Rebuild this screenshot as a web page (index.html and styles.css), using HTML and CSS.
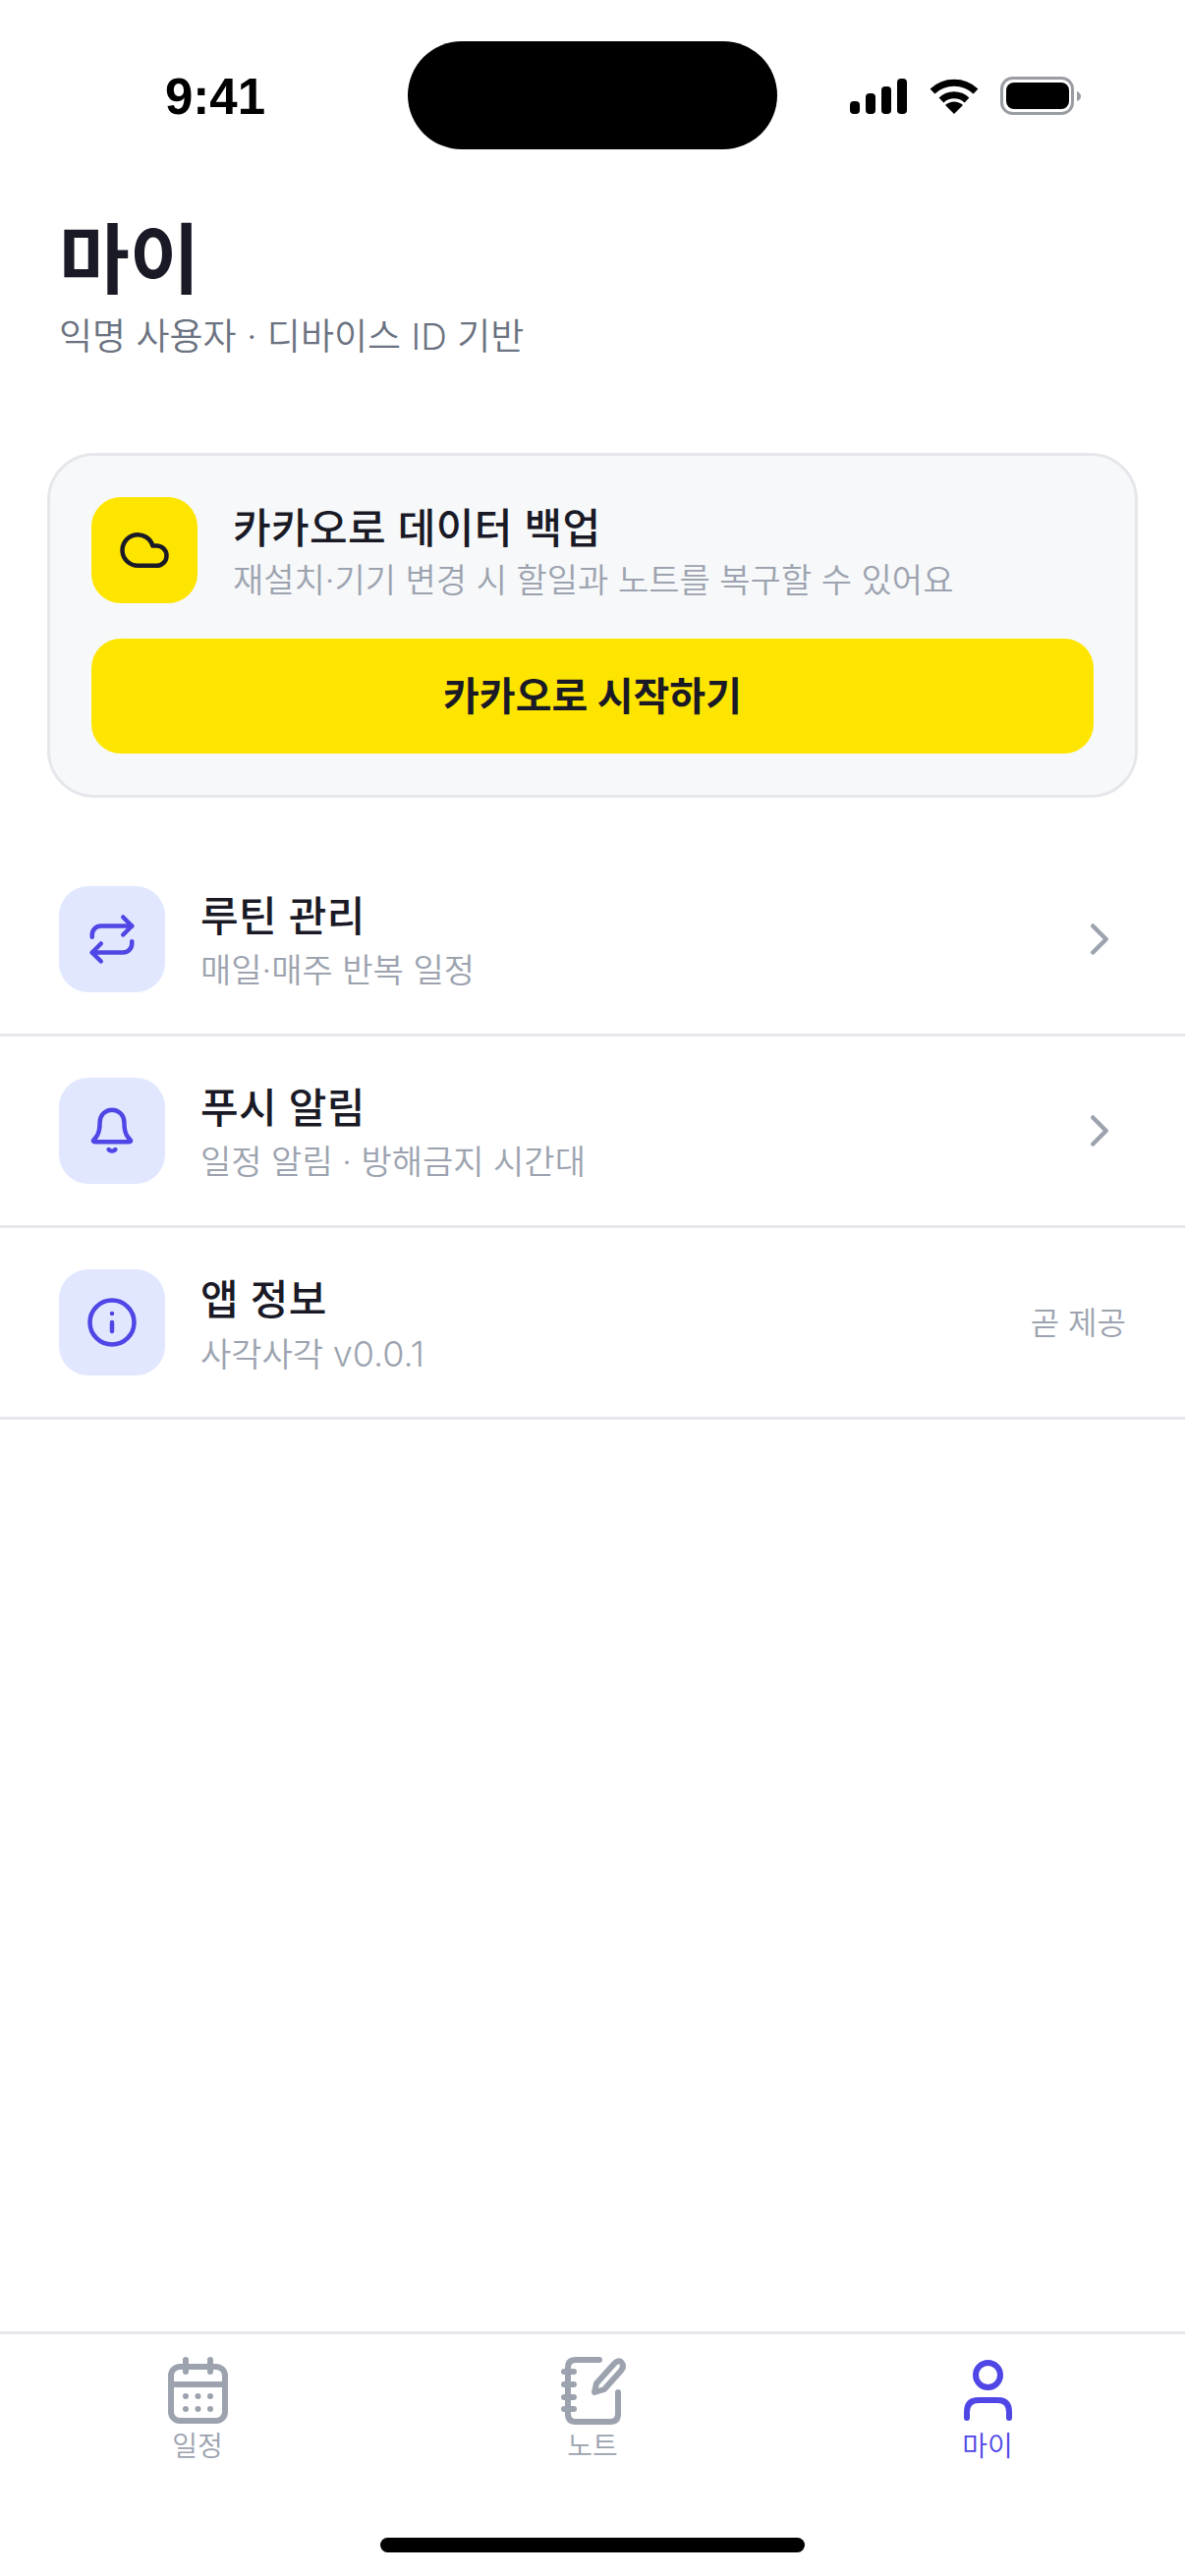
FILE: index.html
```html
<!DOCTYPE html>
<html lang="ko">
<head>
<meta charset="utf-8">
<title>마이</title>
<link rel="stylesheet" href="styles.css">
</head>
<body>
<div class="screen">
  <header class="status">
    <span class="time">9:41</span>
    <div class="island"></div>
    <div class="indicators">
      <svg class="ind-signal" width="58" height="36" viewBox="0 0 58 36"><rect x="0" y="23" width="10" height="13" rx="4"/><rect x="16" y="15" width="10" height="21" rx="4"/><rect x="32" y="8" width="10" height="28" rx="4"/><rect x="48" y="0" width="10" height="36" rx="4"/></svg>
      <svg class="ind-wifi" width="50" height="37" viewBox="0 0 50 37"><path d="M3 14A32 32 0 0 1 47 14" fill="none" stroke="#000" stroke-width="7"/><path d="M12 23A19 19 0 0 1 38 23" fill="none" stroke="#000" stroke-width="7"/><path d="M25 37L16 28A13 13 0 0 1 34 28Z"/></svg>
      <svg class="ind-battery" width="82" height="39" viewBox="0 0 82 39"><rect x="1.5" y="1.5" width="72" height="36" rx="11" fill="none" stroke="#9a9ca3" stroke-width="3"/><rect x="6" y="6" width="64" height="27" rx="8"/><path d="M78 15C81 16 82 18 82 20C82 22 81 24 78 25Z" fill="#9a9ca3"/></svg>
    </div>
  </header>

  <section class="title-block">
    <h1 class="page-title">마이</h1>
    <p class="page-sub">익명 사용자 · 디바이스 ID 기반</p>
  </section>

  <section class="card">
    <div class="card-head">
      <div class="tile tile-yellow">
        <svg width="54" height="54" viewBox="0 0 24 24" fill="none" stroke="#1a1a26" stroke-width="2" stroke-linecap="round" stroke-linejoin="round"><path d="M17.500 19H9a7 7 0 1 1 6.710-9h1.790a4.500 4.500 0 1 1 0 9Z"/></svg>
      </div>
      <div class="text">
        <div class="row-title">카카오로 데이터 백업</div>
        <div class="row-sub">재설치·기기 변경 시 할일과 노트를 복구할 수 있어요</div>
      </div>
    </div>
    <button class="kakao-btn">카카오로 시작하기</button>
  </section>

  <ul class="list">
    <li class="row">
      <div class="tile tile-blue">
        <svg width="54" height="54" viewBox="0 0 24 24" fill="none" stroke="#4f46e5" stroke-width="2" stroke-linecap="round" stroke-linejoin="round"><path d="m17 2 4 4-4 4"/><path d="M3 11v-1a4 4 0 0 1 4-4h14"/><path d="m7 22-4-4 4-4"/><path d="M21 13v1a4 4 0 0 1-4 4H3"/></svg>
      </div>
      <div class="text">
        <div class="row-title">루틴 관리</div>
        <div class="row-sub">매일·매주 반복 일정</div>
      </div>
      <svg class="chevron" width="54" height="54" viewBox="0 0 24 24" fill="none" stroke="#9ca3af" stroke-width="2" stroke-linecap="round" stroke-linejoin="round"><path d="m9 18 6-6-6-6"/></svg>
    </li>
    <li class="row">
      <div class="tile tile-blue">
        <svg width="54" height="54" viewBox="0 0 24 24" fill="none" stroke="#4f46e5" stroke-width="2" stroke-linecap="round" stroke-linejoin="round"><path d="M12 2.500a5.500 5.500 0 0 0-5.500 5.500c0 4-.5 5.500-1.800 7l-.9 1c-.5.6-.2 1 .5 1h15.400c.7 0 1-.4.5-1l-.9-1c-1.300-1.500-1.800-3-1.800-7A5.500 5.500 0 0 0 12 2.500Z"/><path d="M10.500 20.500c.8.8 2.200.8 3 0"/></svg>
      </div>
      <div class="text">
        <div class="row-title">푸시 알림</div>
        <div class="row-sub">일정 알림 · 방해금지 시간대</div>
      </div>
      <svg class="chevron" width="54" height="54" viewBox="0 0 24 24" fill="none" stroke="#9ca3af" stroke-width="2" stroke-linecap="round" stroke-linejoin="round"><path d="m9 18 6-6-6-6"/></svg>
    </li>
    <li class="row">
      <div class="tile tile-blue">
        <svg width="54" height="54" viewBox="0 0 24 24" fill="none" stroke="#4f46e5" stroke-width="2" stroke-linecap="round" stroke-linejoin="round"><circle cx="12" cy="12" r="10"/><path d="M12 16v-4"/><path d="M12 8h.01"/></svg>
      </div>
      <div class="text">
        <div class="row-title">앱 정보</div>
        <div class="row-sub">사각사각 <span class="latin">v0.0.1</span></div>
      </div>
      <span class="soon">곧 제공</span>
    </li>
  </ul>

  <nav class="tabs">
    <div class="tab">
      <svg width="72" height="72" viewBox="0 0 72 72" fill="none" stroke="#9ca3af" stroke-width="6" stroke-linecap="round" stroke-linejoin="round"><rect x="9" y="12" width="55" height="55" rx="9"/><path d="M9 30H64M24 5V17M49 5V17"/><g fill="#9ca3af" stroke="none"><circle cx="24" cy="42" r="3"/><circle cx="36.500" cy="42" r="3"/><circle cx="49" cy="42" r="3"/><circle cx="24" cy="55" r="3"/><circle cx="36.500" cy="55" r="3"/><circle cx="49" cy="55" r="3"/></g></svg>
      <span class="tab-label">일정</span>
    </div>
    <div class="tab">
      <svg width="72" height="72" viewBox="0 0 72 72" fill="none" stroke="#9ca3af" stroke-width="6" stroke-linecap="round" stroke-linejoin="round"><path d="M43 5H19Q11 5 11 13V60Q11 68 19 68H54Q62 68 62 60V38"/><path d="M7 17H17M7 30H17M7 43H17M7 55H17"/><path d="M38 38L40 29L58 9Q62 5 65 7Q69 11 65 16L48 35Z"/></svg>
      <span class="tab-label">노트</span>
    </div>
    <div class="tab tab-active">
      <svg width="72" height="72" viewBox="0 0 72 72" fill="none" stroke="#4f46e5" stroke-width="6" stroke-linecap="round" stroke-linejoin="round"><circle cx="36.500" cy="20.500" r="12.500"/><path d="M15 64V58Q15 46 27 46H46Q58 46 58 58V64"/></svg>
      <span class="tab-label">마이</span>
    </div>
  </nav>
  <div class="home-wrap"><div class="home-bar"></div></div>
</div>
</body>
</html>
```

FILE: styles.css
```css
* { box-sizing: border-box; margin: 0; padding: 0; }
html, body { background: #fff; }
body { width: 1206px; height: 2622px; overflow: hidden; font-family: "Inter", "Noto Sans CJK KR", sans-serif; color: #1a1a26; }
.screen { width: 1206px; height: 2622px; display: flex; flex-direction: column; }

.status { height: 152px; padding-top: 42px; display: flex; justify-content: center; position: relative; flex: none; }
.island { width: 376px; height: 110px; border-radius: 55px; background: #000; }
.time { position: absolute; left: 168px; top: 70px; font: 700 51px/58px "Liberation Sans", sans-serif; color: #000; }
.indicators { position: absolute; left: 865px; top: 78px; width: 235px; height: 39px; display: flex; align-items: center; }
.ind-signal { margin-right: 23px; margin-top: 1px; }
.ind-wifi { margin-right: 22px; }

.title-block { padding: 65px 60px 0; height: 309px; flex: none; }
.page-title { font-size: 78px; line-height: 96px; font-weight: 700; }
.page-sub { font-size: 37px; line-height: 54px; color: #6b7280; font-weight: 350; margin-top: 3px; }

.card { margin: 0 48px; height: 351px; border: 3px solid #e5e7eb; border-radius: 48px; background: #f7f8fa; padding: 42px; display: flex; flex-direction: column; gap: 36px; flex: none; }
.card-head { display: flex; align-items: center; gap: 36px; height: 108px; }
.tile { width: 108px; height: 108px; border-radius: 30px; display: flex; align-items: center; justify-content: center; flex: none; }
.tile-yellow { background: #fee500; }
.tile-blue { background: #e0e7ff; }
.text { flex: 1; display: flex; flex-direction: column; min-width: 0; padding-top: 6px; }
.row-title { font-size: 42px; line-height: 54px; font-weight: 500; letter-spacing: .4px; color: #1a1a26; }
.row-sub { font-size: 34px; line-height: 48px; padding-top: 4px; color: #9ca3af; font-weight: 350; }
.card .row-sub { padding-top: 2px; }
.latin { font-size: 36px; }
.kakao-btn { height: 117px; border: none; border-radius: 30px; background: #fee500; color: #1a1a26; font: 700 40px "Inter", "Noto Sans CJK KR", sans-serif; padding-bottom: 5px; }

.list { list-style: none; margin-top: 48px; flex: none; }
.row { height: 195px; padding: 0 60px; border-bottom: 3px solid #e5e7eb; display: flex; align-items: center; gap: 36px; }
.soon { font-size: 32px; color: #9ca3af; font-weight: 350; padding-bottom: 5px; }
.chevron { flex: none; }

.tabs { margin-top: auto; height: 150px; border-top: 3px solid #e5e7eb; display: grid; grid-template-columns: repeat(3, 1fr); padding-top: 21px; flex: none; }
.tab { display: flex; flex-direction: column; align-items: center; color: #9ca3af; }
.tab-active { color: #4f46e5; }
.tab-label { font-size: 28px; line-height: 36px; margin-top: 3px; font-weight: 350; }
.home-wrap { height: 99px; flex: none; padding-top: 60px; }
.home-bar { width: 432px; height: 15px; border-radius: 8px; background: #000; margin: 0 auto; }
```
